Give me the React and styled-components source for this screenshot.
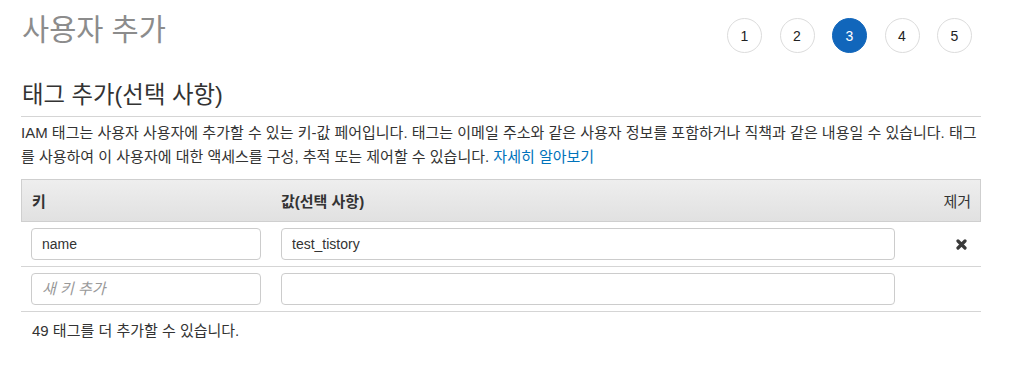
import React from "react";
import styled, { createGlobalStyle } from "styled-components";

const Global = createGlobalStyle`
  html, body { margin: 0; padding: 0; background: #fff; }
  body {
    font-family: "Liberation Sans", "Noto Sans CJK KR", sans-serif;
    color: #333;
    font-size: 15px;
  }
  * { box-sizing: border-box; }
`;

const Page = styled.div`
  width: 960px;
  margin-left: 21px;
`;

const TopBar = styled.div`
  display: flex;
  justify-content: space-between;
  align-items: flex-start;
`;

const Title = styled.h1`
  margin: 11px 0 0 1px;
  font-size: 29.5px;
  line-height: 38px;
  font-weight: 400;
  color: #8c8c8c;
`;

const Steps = styled.div`
  display: flex;
  gap: 17.5px;
  margin: 18px 9px 0 0;
`;

const Step = styled.div`
  width: 35px;
  height: 35px;
  border-radius: 50%;
  display: flex;
  align-items: center;
  justify-content: center;
  font-size: 14px;
  color: ${(p) => (p.$active ? "#fff" : "#222")};
  background: ${(p) => (p.$active ? "#1166bb" : "#fff")};
  border: 1px solid ${(p) => (p.$active ? "#1166bb" : "#dcdcdc")};
`;

const SectionTitle = styled.h2`
  margin: 26px 0 0 1px;
  font-size: 23.4px;
  line-height: 32px;
  font-weight: 400;
  color: #333;
`;

const Divider = styled.hr`
  margin: 5px 0 0;
  border: none;
  border-top: 1px solid #d5d5d5;
`;

const Description = styled.p`
  margin: 4px 0 0;
  font-size: 15px;
  line-height: 24px;
  color: #333;
  word-break: break-all;
`;

const Link = styled.a`
  color: #0073bb;
  text-decoration: none;
`;

const Table = styled.div`
  margin-top: 10px;
`;

const HeaderRow = styled.div`
  display: grid;
  grid-template-columns: 249px 634px 1fr;
  height: 43px;
  align-items: center;
  border: 1px solid #cfcfcf;
  background: linear-gradient(#eeeeee, #e1e1e1);
  font-size: 15px;
  color: #333;
`;

const HeadCell = styled.div`
  padding: 0 ${(p) => (p.$right ? "9px" : "10px")};
  font-weight: ${(p) => (p.$light ? 400 : 700)};
  text-align: ${(p) => (p.$right ? "right" : "left")};
`;

const Row = styled.div`
  display: grid;
  grid-template-columns: 250px 634px 1fr;
  align-items: center;
  border-bottom: 1px solid #d5d5d5;
`;

const Cell = styled.div`
  padding: 6px 10px;
  display: flex;
  justify-content: ${(p) => (p.$right ? "flex-end" : "flex-start")};
  padding-right: ${(p) => (p.$right ? "14px" : "10px")};
`;

const Input = styled.input`
  width: 100%;
  height: 32px;
  border: 1px solid #cccccc;
  border-radius: 4px;
  padding: 0 10px;
  font-family: "Liberation Sans", "Noto Sans CJK KR", sans-serif;
  font-size: 14px;
  color: #333;
  outline: none;
  &::placeholder {
    color: #999;
    font-style: italic;
    font-size: 15px;
  }
`;

const RemoveButton = styled.button`
  border: none;
  background: none;
  padding: 0;
  color: #3a3a3a;
  display: flex;
  align-items: center;
  cursor: pointer;
`;

const Footer = styled.div`
  padding: 9px 11px;
  font-size: 15px;
  line-height: 20px;
  color: #333;
`;

const CloseIcon = () => (
  <svg width="11" height="11" viewBox="0 0 11 11" aria-hidden="true">
    <path
      d="M2 2 L9 9 M9 2 L2 9"
      stroke="currentColor"
      strokeWidth="3.2"
      strokeLinecap="round"
      fill="none"
    />
  </svg>
);

export default function App() {
  return (
    <>
      <Global />
      <Page>
        <TopBar>
          <Title>사용자 추가</Title>
          <Steps>
            {[1, 2, 3, 4, 5].map((n) => (
              <Step key={n} $active={n === 3}>
                {n}
              </Step>
            ))}
          </Steps>
        </TopBar>
        <SectionTitle>태그 추가(선택 사항)</SectionTitle>
        <Divider />
        <Description>
          IAM 태그는 사용자 사용자에 추가할 수 있는 키-값 페어입니다. 태그는 이메일 주소와 같은 사용자 정보를 포함하거나 직책과 같은 내용일 수 있습니다. 태그를 사용하여 이 사용자에 대한 액세스를 구성, 추적 또는 제어할 수 있습니다.{" "}
          <Link href="#">자세히 알아보기</Link>
        </Description>
        <Table>
          <HeaderRow>
            <HeadCell>키</HeadCell>
            <HeadCell>값(선택 사항)</HeadCell>
            <HeadCell $right $light>제거</HeadCell>
          </HeaderRow>
          <Row>
            <Cell><Input defaultValue="name" /></Cell>
            <Cell><Input defaultValue="test_tistory" /></Cell>
            <Cell $right>
              <RemoveButton aria-label="제거"><CloseIcon /></RemoveButton>
            </Cell>
          </Row>
          <Row>
            <Cell><Input placeholder="새 키 추가" /></Cell>
            <Cell><Input /></Cell>
            <Cell $right />
          </Row>
          <Footer>49 태그를 더 추가할 수 있습니다.</Footer>
        </Table>
      </Page>
    </>
  );
}
